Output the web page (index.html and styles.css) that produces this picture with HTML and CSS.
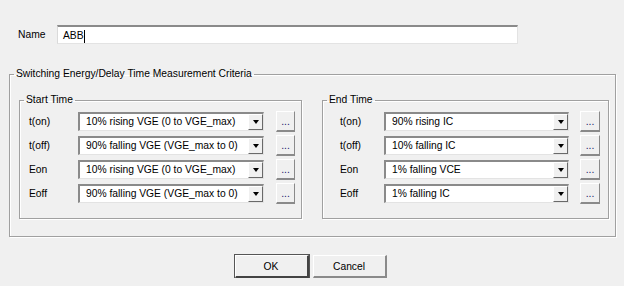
FILE: index.html
```html
<!DOCTYPE html>
<html lang="en">

<head>
    <meta charset="UTF-8" />
    <title>Switching Energy Criteria</title>
    <link rel="stylesheet" href="styles.css">
</head>

<body>
    <div class="dialog">
        <div class="name-row">
            <label class="name-label" for="name">Name</label>
            <div class="name-input" id="name">ABB<span class="caret"></span></div>
        </div>

        <fieldset class="criteria">
            <legend>Switching Energy/Delay Time Measurement Criteria</legend>
            <div class="groups">
                <fieldset class="group group-start">
                    <legend>Start Time</legend>
                    <div class="row">
                        <span class="lbl">t(on)</span>
                        <div class="combo"><span class="combo-text">10% rising VGE (0 to VGE_max)</span><span class="combo-btn"><i class="arrow"></i></span></div>
                        <span class="more">...</span>
                    </div>
                    <div class="row">
                        <span class="lbl">t(off)</span>
                        <div class="combo"><span class="combo-text">90% falling VGE (VGE_max to 0)</span><span class="combo-btn"><i class="arrow"></i></span></div>
                        <span class="more">...</span>
                    </div>
                    <div class="row">
                        <span class="lbl">Eon</span>
                        <div class="combo"><span class="combo-text">10% rising VGE (0 to VGE_max)</span><span class="combo-btn"><i class="arrow"></i></span></div>
                        <span class="more">...</span>
                    </div>
                    <div class="row">
                        <span class="lbl">Eoff</span>
                        <div class="combo"><span class="combo-text">90% falling VGE (VGE_max to 0)</span><span class="combo-btn"><i class="arrow"></i></span></div>
                        <span class="more">...</span>
                    </div>
                </fieldset>

                <fieldset class="group group-end">
                    <legend>End Time</legend>
                    <div class="row">
                        <span class="lbl">t(on)</span>
                        <div class="combo"><span class="combo-text">90% rising IC</span><span class="combo-btn"><i class="arrow"></i></span></div>
                        <span class="more">...</span>
                    </div>
                    <div class="row">
                        <span class="lbl">t(off)</span>
                        <div class="combo"><span class="combo-text">10% falling IC</span><span class="combo-btn"><i class="arrow"></i></span></div>
                        <span class="more">...</span>
                    </div>
                    <div class="row">
                        <span class="lbl">Eon</span>
                        <div class="combo"><span class="combo-text">1% falling VCE</span><span class="combo-btn"><i class="arrow"></i></span></div>
                        <span class="more">...</span>
                    </div>
                    <div class="row">
                        <span class="lbl">Eoff</span>
                        <div class="combo"><span class="combo-text">1% falling IC</span><span class="combo-btn"><i class="arrow"></i></span></div>
                        <span class="more">...</span>
                    </div>
                </fieldset>
            </div>
        </fieldset>

        <div class="actions">
            <button type="button" class="btn btn-default">OK</button>
            <button type="button" class="btn">Cancel</button>
        </div>
    </div>
</body>

</html>
```

FILE: styles.css
```css
html,
body {
    margin: 0;
    padding: 0;
    background-color: #f0f0f0;
}

body {
    font-family: "Liberation Sans", Arial, sans-serif;
    font-size: 10.3px;
    color: #000;
}

.dialog {
    padding: 25px 8px 0 9px;
}

/* name row */
.name-row {
    display: flex;
    align-items: center;
    padding-left: 9px;
}

.name-label {
    width: 39px;
}

.name-input {
    width: 461px;
    height: 19px;
    box-sizing: border-box;
    background: #fff;
    border-top: 2px solid #8a8a8a;
    border-left: 1px solid #dadada;
    border-right: 1px solid #e3e3e3;
    border-bottom: 1px solid #e3e3e3;
    padding: 2px 5px 0;
    line-height: 14px;
    display: flex;
    align-items: center;
}

.caret {
    display: inline-block;
    width: 1px;
    height: 13px;
    background: #000;
}

/* group boxes */
fieldset {
    margin: 0;
    min-width: 0;
    border: 1px solid #a0a0a0;
    box-shadow: inset 1px 1px 0 #fff, 1px 1px 0 #fff;
}

legend {
    padding: 0 2px;
    margin-left: 4px;
    line-height: 14px;
}

.criteria {
    margin-top: 23px;
    padding: 12px 0 17px;
}

.groups {
    display: flex;
    gap: 20px;
    padding: 0 6px 0 9px;
}

.group {
    padding: 4px 0 15px 0;
    box-sizing: border-box;
}

.group-start {
    width: 283px;
}

.group-end {
    width: 287px;
}

.row {
    display: grid;
    align-items: center;
    height: 20px;
    margin-top: 4px;
}

.row:first-of-type {
    margin-top: 0;
}

.group-start .row {
    grid-template-columns: 37px 186px 19px;
    column-gap: 12px;
    padding-left: 9px;
}

.group-end .row {
    grid-template-columns: 33px 185px 20px;
    column-gap: 11px;
    padding-left: 17px;
}

/* combo boxes */
.combo {
    height: 19px;
    box-sizing: border-box;
    display: flex;
    background: #fff;
    border-top: 2px solid #8a8a8a;
    border-left: 2px solid #8a8a8a;
    border-right: 1px solid #e3e3e3;
    border-bottom: 1px solid #e3e3e3;
}

.combo-text {
    flex: 1;
    padding-left: 6px;
    line-height: 16px;
    white-space: nowrap;
    overflow: hidden;
}

.combo-btn {
    width: 15px;
    box-sizing: border-box;
    background: #f0f0f0;
    border-top: 1px solid #fff;
    border-left: 1px solid #fff;
    border-right: 1px solid #696969;
    border-bottom: 1px solid #696969;
    display: flex;
    align-items: center;
    justify-content: center;
}

.arrow {
    width: 0;
    height: 0;
    border-left: 3.5px solid transparent;
    border-right: 3.5px solid transparent;
    border-top: 4px solid #000;
}

.more {
    height: 21px;
    box-sizing: border-box;
    background: #f0f0f0;
    border-top: 1px solid #fff;
    border-left: 1px solid #fff;
    border-right: 1px solid #8a8a8a;
    border-bottom: 2px solid #8a8a8a;
    text-align: center;
    line-height: 20px;
    color: #1a1a6a;
}

/* buttons */
.actions {
    display: flex;
    justify-content: center;
    gap: 4px;
    margin-top: 18px;
    padding-right: 4px;
}

.btn {
    width: 74px;
    height: 23px;
    box-sizing: border-box;
    font: inherit;
    color: #000;
    background: #f0f0f0;
    border-top: 1px solid #fff;
    border-left: 1px solid #fff;
    border-right: 2px solid #8a8a8a;
    border-bottom: 2px solid #8a8a8a;
    padding: 0;
}

.btn-default {
    outline: 1px solid #555;
    border-right-color: #444;
    border-bottom-color: #444;
}
```
